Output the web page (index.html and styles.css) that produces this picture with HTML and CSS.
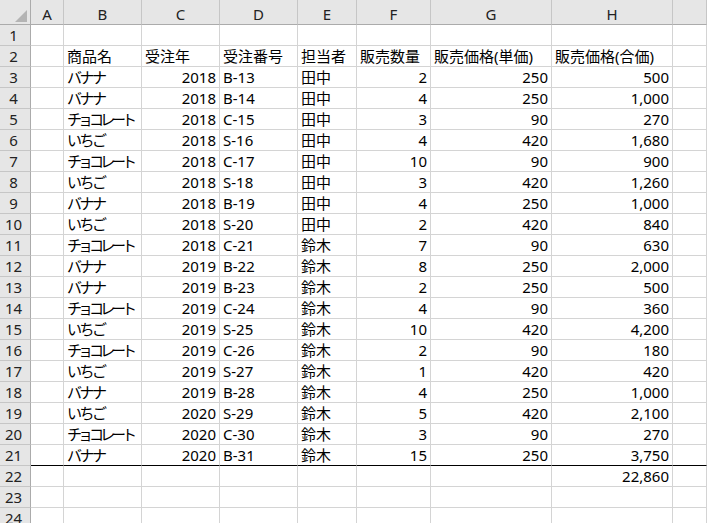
FILE: index.html
```html
<!DOCTYPE html>
<html lang="ja">
<head>
<meta charset="utf-8">
<title>Sheet</title>
<link rel="stylesheet" href="styles.css">
</head>
<body>
<div class="sheet">
  <div class="corner"></div><div class="ch">A</div><div class="ch">B</div><div class="ch">C</div><div class="ch">D</div><div class="ch">E</div><div class="ch">F</div><div class="ch">G</div><div class="ch">H</div><div class="ch"></div>

  <div class="rh">1</div><div class="c"></div><div class="c"></div><div class="c"></div><div class="c"></div><div class="c"></div><div class="c"></div><div class="c"></div><div class="c"></div><div class="c"></div>
  <div class="rh">2</div><div class="c"></div><div class="c">商品名</div><div class="c">受注年</div><div class="c">受注番号</div><div class="c">担当者</div><div class="c">販売数量</div><div class="c">販売価格(単価)</div><div class="c">販売価格(合価)</div><div class="c"></div>
  <div class="rh">3</div><div class="c"></div><div class="c"><span class="k3">バナナ</span></div><div class="c n">2018</div><div class="c">B-13</div><div class="c">田中</div><div class="c n">2</div><div class="c n">250</div><div class="c n">500</div><div class="c"></div>
  <div class="rh">4</div><div class="c"></div><div class="c"><span class="k3">バナナ</span></div><div class="c n">2018</div><div class="c">B-14</div><div class="c">田中</div><div class="c n">4</div><div class="c n">250</div><div class="c n">1,000</div><div class="c"></div>
  <div class="rh">5</div><div class="c"></div><div class="c"><span class="k6">チョコレート</span></div><div class="c n">2018</div><div class="c">C-15</div><div class="c">田中</div><div class="c n">3</div><div class="c n">90</div><div class="c n">270</div><div class="c"></div>
  <div class="rh">6</div><div class="c"></div><div class="c"><span class="k3">いちご</span></div><div class="c n">2018</div><div class="c">S-16</div><div class="c">田中</div><div class="c n">4</div><div class="c n">420</div><div class="c n">1,680</div><div class="c"></div>
  <div class="rh">7</div><div class="c"></div><div class="c"><span class="k6">チョコレート</span></div><div class="c n">2018</div><div class="c">C-17</div><div class="c">田中</div><div class="c n">10</div><div class="c n">90</div><div class="c n">900</div><div class="c"></div>
  <div class="rh">8</div><div class="c"></div><div class="c"><span class="k3">いちご</span></div><div class="c n">2018</div><div class="c">S-18</div><div class="c">田中</div><div class="c n">3</div><div class="c n">420</div><div class="c n">1,260</div><div class="c"></div>
  <div class="rh">9</div><div class="c"></div><div class="c"><span class="k3">バナナ</span></div><div class="c n">2018</div><div class="c">B-19</div><div class="c">田中</div><div class="c n">4</div><div class="c n">250</div><div class="c n">1,000</div><div class="c"></div>
  <div class="rh">10</div><div class="c"></div><div class="c"><span class="k3">いちご</span></div><div class="c n">2018</div><div class="c">S-20</div><div class="c">田中</div><div class="c n">2</div><div class="c n">420</div><div class="c n">840</div><div class="c"></div>
  <div class="rh">11</div><div class="c"></div><div class="c"><span class="k6">チョコレート</span></div><div class="c n">2018</div><div class="c">C-21</div><div class="c">鈴木</div><div class="c n">7</div><div class="c n">90</div><div class="c n">630</div><div class="c"></div>
  <div class="rh">12</div><div class="c"></div><div class="c"><span class="k3">バナナ</span></div><div class="c n">2019</div><div class="c">B-22</div><div class="c">鈴木</div><div class="c n">8</div><div class="c n">250</div><div class="c n">2,000</div><div class="c"></div>
  <div class="rh">13</div><div class="c"></div><div class="c"><span class="k3">バナナ</span></div><div class="c n">2019</div><div class="c">B-23</div><div class="c">鈴木</div><div class="c n">2</div><div class="c n">250</div><div class="c n">500</div><div class="c"></div>
  <div class="rh">14</div><div class="c"></div><div class="c"><span class="k6">チョコレート</span></div><div class="c n">2019</div><div class="c">C-24</div><div class="c">鈴木</div><div class="c n">4</div><div class="c n">90</div><div class="c n">360</div><div class="c"></div>
  <div class="rh">15</div><div class="c"></div><div class="c"><span class="k3">いちご</span></div><div class="c n">2019</div><div class="c">S-25</div><div class="c">鈴木</div><div class="c n">10</div><div class="c n">420</div><div class="c n">4,200</div><div class="c"></div>
  <div class="rh">16</div><div class="c"></div><div class="c"><span class="k6">チョコレート</span></div><div class="c n">2019</div><div class="c">C-26</div><div class="c">鈴木</div><div class="c n">2</div><div class="c n">90</div><div class="c n">180</div><div class="c"></div>
  <div class="rh">17</div><div class="c"></div><div class="c"><span class="k3">いちご</span></div><div class="c n">2019</div><div class="c">S-27</div><div class="c">鈴木</div><div class="c n">1</div><div class="c n">420</div><div class="c n">420</div><div class="c"></div>
  <div class="rh">18</div><div class="c"></div><div class="c"><span class="k3">バナナ</span></div><div class="c n">2019</div><div class="c">B-28</div><div class="c">鈴木</div><div class="c n">4</div><div class="c n">250</div><div class="c n">1,000</div><div class="c"></div>
  <div class="rh">19</div><div class="c"></div><div class="c"><span class="k3">いちご</span></div><div class="c n">2020</div><div class="c">S-29</div><div class="c">鈴木</div><div class="c n">5</div><div class="c n">420</div><div class="c n">2,100</div><div class="c"></div>
  <div class="rh">20</div><div class="c"></div><div class="c"><span class="k6">チョコレート</span></div><div class="c n">2020</div><div class="c">C-30</div><div class="c">鈴木</div><div class="c n">3</div><div class="c n">90</div><div class="c n">270</div><div class="c"></div>
  <div class="rh">21</div><div class="c t"></div><div class="c t"><span class="k3">バナナ</span></div><div class="c n t">2020</div><div class="c t">B-31</div><div class="c t">鈴木</div><div class="c n t">15</div><div class="c n t">250</div><div class="c n t">3,750</div><div class="c t"></div>
  <div class="rh">22</div><div class="c"></div><div class="c"></div><div class="c"></div><div class="c"></div><div class="c"></div><div class="c"></div><div class="c"></div><div class="c n">22,860</div><div class="c"></div>
  <div class="rh">23</div><div class="c"></div><div class="c"></div><div class="c"></div><div class="c"></div><div class="c"></div><div class="c"></div><div class="c"></div><div class="c"></div><div class="c"></div>
  <div class="rh">24</div><div class="c"></div><div class="c"></div><div class="c"></div><div class="c"></div><div class="c"></div><div class="c"></div><div class="c"></div><div class="c"></div><div class="c"></div>
</div>
</body>
</html>
```
FILE: styles.css
```css
html, body {
  margin: 0;
  padding: 0;
  background: #ffffff;
  overflow: hidden;
}

.sheet {
  display: grid;
  grid-template-columns: 31px 33px 78px 78px 78px 59px 74px 121px 121px 1fr;
  grid-template-rows: 25px;
  grid-auto-rows: 21px;
  font-family: "Noto Sans", "Noto Sans CJK JP", sans-serif;
  font-size: 15px;
  color: #000000;
}

.sheet > div {
  box-sizing: border-box;
  white-space: nowrap;
  overflow: hidden;
  line-height: 20px;
}

.corner {
  background: #e6e6e6;
  border-right: 1px solid #ababab;
  border-bottom: 1px solid #ababab;
  display: flex;
  justify-content: flex-end;
  align-items: flex-end;
  padding: 0 3px 2px 0;
}

.corner::after {
  content: "";
  width: 0;
  height: 0;
  border-left: 12px solid transparent;
  border-bottom: 12px solid #b4b4b4;
}

.ch {
  background: #e6e6e6;
  border-right: 1px solid #c6c6c6;
  border-bottom: 1px solid #ababab;
  text-align: center;
  padding-top: 4px;
  color: #222222;
}

.rh {
  background: #e6e6e6;
  border-right: 1px solid #ababab;
  border-bottom: 1px solid #c6c6c6;
  text-align: center;
  padding-right: 3px;
  color: #222222;
}

.c {
  border-right: 1px solid #d4d4d4;
  border-bottom: 1px solid #d4d4d4;
  padding: 0 3px;
}

.n {
  text-align: right;
}

.t {
  border-bottom-color: #000000;
}

.k3 {
  letter-spacing: -2.5px;
}

.k6 {
  letter-spacing: -4px;
}
```
